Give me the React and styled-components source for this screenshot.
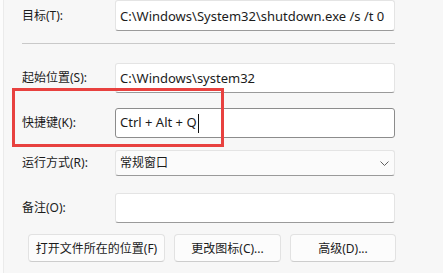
import React from 'react';
import styled, { createGlobalStyle } from 'styled-components';

const GlobalStyle = createGlobalStyle`
    html, body {
        margin: 0;
        padding: 0;
        background: #f7f7f7;
    }
    body {
        font-family: "Noto Sans", "Noto Sans CJK SC", sans-serif;
        font-size: 12px;
        color: #1b1b1b;
    }
`;

const Page = styled.div`
    position: relative;
    display: flex;
    width: 443px;
    height: 273px;
    overflow: hidden;
    background: #f7f7f7;
`;

const Edge = styled.div`
    width: 3px;
    flex: none;
    background: #fcfcfc;
    border-right: 1px solid #ebebeb;
`;

const Body = styled.div`
    display: flex;
    flex-direction: column;
    padding-left: 18px;
`;

const Row = styled.div`
    display: grid;
    grid-template-columns: 93px 280px;
    align-items: center;
    margin-top: ${(p) => p.$gap || 0}px;
`;

const Label = styled.span`
    font-family: "Noto Sans", "Noto Sans CJK SC", sans-serif;
    font-size: 12px;
    line-height: 16px;
    color: #1b1b1b;
`;

const Field = styled.div`
    box-sizing: border-box;
    height: ${(p) => p.$h || 30}px;
    display: flex;
    align-items: center;
    justify-content: space-between;
    padding: 0 5px 0 4px;
    background: ${(p) => (p.$combo ? '#fbfbfb' : '#ffffff')};
    border: 1px solid ${(p) => (p.$focused ? '#8c8c8c' : '#e4e4e4')};
    border-bottom-color: ${(p) => (p.$focused ? '#8c8c8c' : '#9a9a9a')};
    border-radius: 3px;
    font-family: "Noto Sans", "Noto Sans CJK SC", sans-serif;
    font-size: 13px;
    white-space: nowrap;
`;

const Caret = styled.span`
    display: inline-block;
    width: 1px;
    height: 19px;
    background: #111;
    vertical-align: middle;
    margin-left: 1px;
`;

const Separator = styled.div`
    margin-top: 12px;
    width: 373px;
    height: 1px;
    background: #c9c9c9;
`;

const Buttons = styled.div`
    display: flex;
    gap: 9px;
    margin-top: 11px;
    padding-left: 6px;
`;

const Button = styled.button`
    box-sizing: border-box;
    width: ${(p) => p.$w}px;
    height: 28px;
    background: #fcfcfc;
    border: 1px solid #e2e2e2;
    border-bottom-color: #cdcdcd;
    border-radius: 4px;
    font-family: "Noto Sans", "Noto Sans CJK SC", sans-serif;
    font-size: 12px;
    color: #1b1b1b;
    padding: 0;
`;

const Highlight = styled.div`
    position: absolute;
    left: 12px;
    top: 88px;
    width: 212px;
    height: 59px;
    box-sizing: border-box;
    border: 3px solid #e8413f;
    pointer-events: none;
`;

const Chevron = () => (
    <svg width="9" height="5" viewBox="0 0 9 5" fill="none">
        <path d="M0.5 0.5l4 4 4-4" stroke="#606060" strokeWidth="1" />
    </svg>
);

export default function App() {
    return (
        <Page>
            <GlobalStyle />
            <Edge />
            <Body>
                <Row>
                    <Label>目标(T):</Label>
                    <Field $h={31}>C:\Windows\System32\shutdown.exe /s /t 0</Field>
                </Row>
                <Separator />
                <Row $gap={19}>
                    <Label>起始位置(S):</Label>
                    <Field>C:\Windows\system32</Field>
                </Row>
                <Row $gap={15}>
                    <Label>快捷键(K):</Label>
                    <Field $focused>
                        <span>
                            Ctrl + Alt + Q<Caret />
                        </span>
                    </Field>
                </Row>
                <Row $gap={12}>
                    <Label>运行方式(R):</Label>
                    <Field $h={26} $combo>
                        <Label>常规窗口</Label>
                        <Chevron />
                    </Field>
                </Row>
                <Row $gap={17}>
                    <Label>备注(O):</Label>
                    <Field />
                </Row>
                <Buttons>
                    <Button $w={137}>打开文件所在的位置(F)</Button>
                    <Button $w={107}>更改图标(C)...</Button>
                    <Button $w={106}>高级(D)...</Button>
                </Buttons>
            </Body>
            <Highlight />
        </Page>
    );
}
